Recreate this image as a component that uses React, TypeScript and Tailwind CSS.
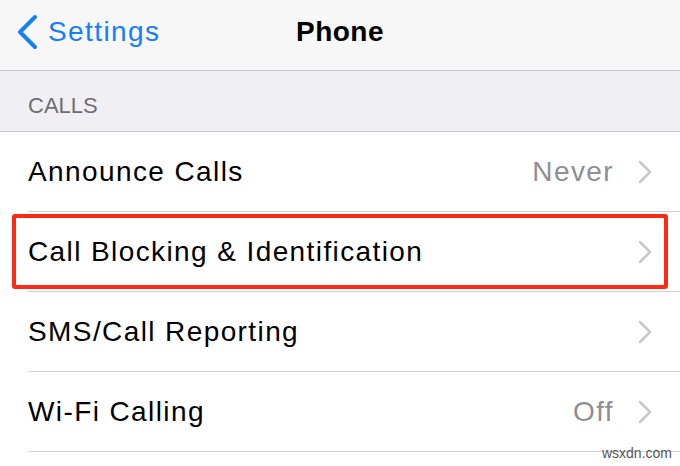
import React from 'react';

const font = { fontFamily: '"Liberation Sans", Arial, sans-serif' };

const Chevron = () => (
  <svg width="14" height="24" viewBox="0 0 14 24" className="shrink-0">
    <path d="M2 2l10 10-10 10" fill="none" stroke="#c7c7cc" strokeWidth="2.5" strokeLinecap="round" strokeLinejoin="round" />
  </svg>
);

interface RowProps {
  label: string;
  value?: string;
  highlight?: boolean;
}

const Row: React.FC<RowProps> = ({ label, value, highlight }) => (
  <div className="relative h-[80px] pl-[28px]">
    <div className="flex h-[79px] items-center pr-[28px]">
      <span className="flex-1 text-[28px] text-black tracking-[1.4px]">{label}</span>
      {value && <span className="mr-[24px] text-[28px] text-[#8e8e93] tracking-[1.4px]">{value}</span>}
      <Chevron />
    </div>
    <div className="h-px bg-[#d1d1d6]" />
    {highlight && (
      <div className="absolute left-[12px] right-[12px] top-[2px] bottom-[3px] rounded-[3px] border-[4px] border-[#ff2a14]" />
    )}
  </div>
);

export default function App() {
  return (
    <div className="relative h-[466px] w-[680px] overflow-hidden bg-white" style={font}>
      <div className="flex h-[71px] items-center border-b border-[#c8c7cc] bg-[#f7f7f7] pb-[6px]">
        <div className="flex w-[200px] items-center pl-[16px]">
          <svg width="24" height="36" viewBox="0 0 24 36">
            <path d="M19 3L4 18l15 15" fill="none" stroke="#157efb" strokeWidth="4" strokeLinecap="round" strokeLinejoin="round" />
          </svg>
          <span className="ml-[8px] text-[28px] text-[#157efb] tracking-[1.4px]">Settings</span>
        </div>
        <div className="flex-1 pr-[200px] text-center text-[28px] font-bold text-black tracking-[0.5px]">Phone</div>
      </div>
      <div className="flex h-[61px] items-center border-b border-[#c8c7cc] bg-[#efeff4] pl-[28px] pt-[8px] text-[22px] text-[#6d6d72]">
        CALLS
      </div>
      <Row label="Announce Calls" value="Never" />
      <Row label="Call Blocking & Identification" highlight />
      <Row label="SMS/Call Reporting" />
      <Row label="Wi-Fi Calling" value="Off" />
      <div className="absolute bottom-[2px] right-[8px] text-[14px] text-[#555]">wsxdn.com</div>
    </div>
  );
}
